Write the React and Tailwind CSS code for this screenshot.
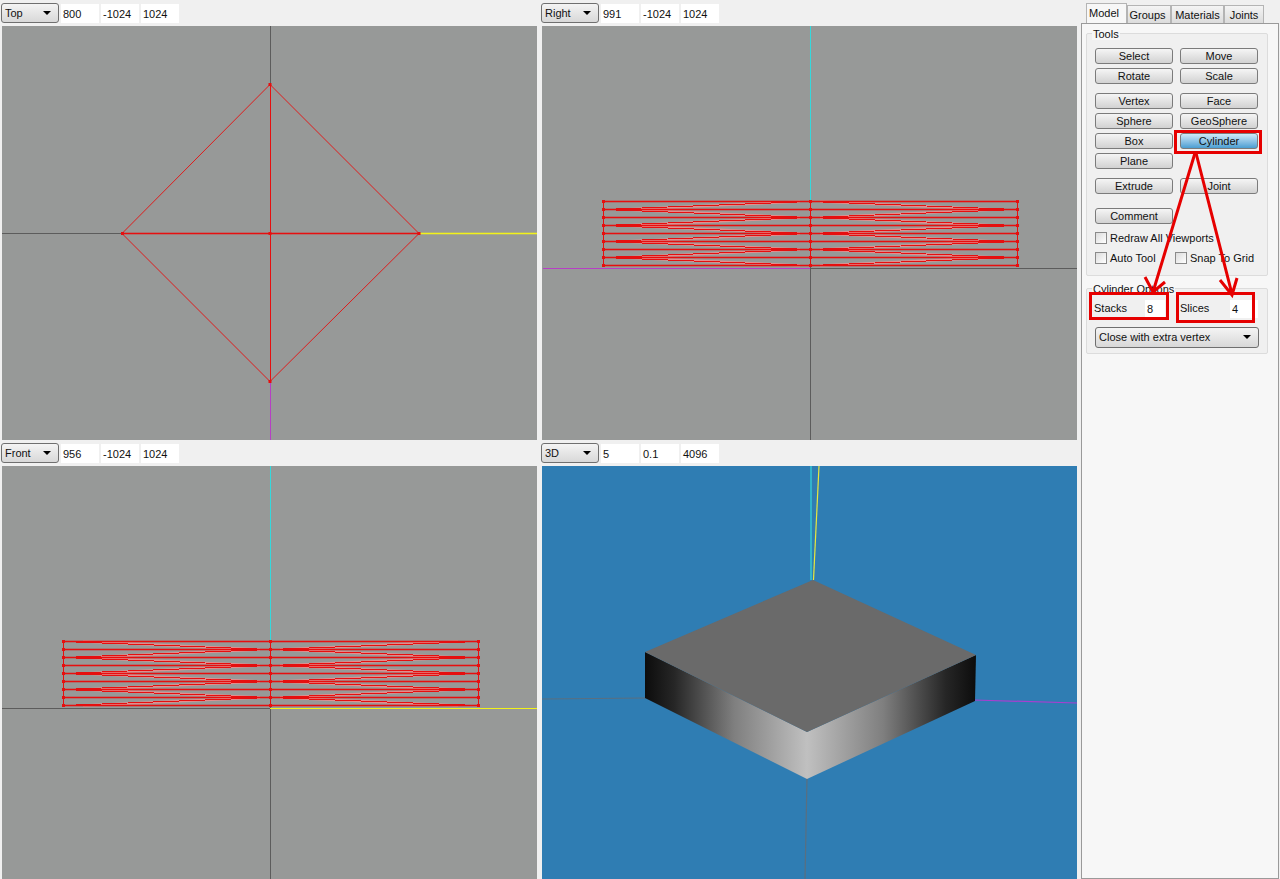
import React from "react";

const ROW_PITCH = 8;
const RED = "#e60f0f";

// single pixel line plus the faint colour bleed the screenshot has around it
function HLine({ x1, x2, y, color }) {
  return (
    <g>
      <line x1={x1} y1={y + 0.5} x2={x2} y2={y + 0.5} stroke={color} strokeWidth="3" opacity="0.28" />
      <line x1={x1} y1={y + 0.5} x2={x2} y2={y + 0.5} stroke={color} strokeWidth="1" shapeRendering="crispEdges" />
    </g>
  );
}

function Mesh({ left, right, center, top, flip }) {
  const rows = Array.from({ length: 9 }, (_, i) => top + i * ROW_PITCH);
  // every band has one diagonal per half, the two halves mirror each other
  const diagonals = [];
  for (let i = 0; i < 8; i++) {
    const leftRow = (i % 2 === 0) === flip ? i : i + 1;
    const midRow = leftRow === i ? i + 1 : i;
    diagonals.push([rows[leftRow], rows[midRow]]);
  }
  return (
    <g>
      <g stroke="#ff8a8a" strokeWidth="2.5" opacity="0.75">
        {diagonals.map(([a, b], i) => (
          <g key={i}>
            <line x1={left + 20} y1={a + 0.5} x2={center - 10} y2={b + 0.5} />
            <line x1={right - 20} y1={a + 0.5} x2={center + 10} y2={b + 0.5} />
          </g>
        ))}
      </g>
      {rows.map((y) => (
        <HLine key={y} x1={left} x2={right} y={y} color={RED} />
      ))}
      <g stroke={RED} strokeWidth="1" shapeRendering="crispEdges">
        {[left, center, right].map((x) => (
          <line key={x} x1={x + 0.5} y1={top} x2={x + 0.5} y2={top + 64} />
        ))}
        {diagonals.map(([a, b], i) => (
          <g key={i}>
            <line x1={left} y1={a + 0.5} x2={center} y2={b + 0.5} />
            <line x1={right} y1={a + 0.5} x2={center} y2={b + 0.5} />
          </g>
        ))}
      </g>
      <g fill={RED}>
        {rows.map((y) =>
          [left, center, right].map((x) => <rect key={x} x={x - 1} y={y - 1} width="3" height="3" />)
        )}
      </g>
    </g>
  );
}

function TopView() {
  return (
    <svg width="535" height="414" viewBox="2 26 535 414" className="block">
      <g strokeWidth="1" shapeRendering="crispEdges">
        <line x1="270.5" y1="26" x2="270.5" y2="84" stroke="#5c5c5c" />
        <line x1="2" y1="233.5" x2="122" y2="233.5" stroke="#5c5c5c" />
        <line x1="270.5" y1="381" x2="270.5" y2="440" stroke="#b63fc4" />
        <line x1="270.5" y1="84" x2="270.5" y2="381" stroke={RED} />
      </g>
      <HLine x1={419} x2={537} y={233} color="#f2f21a" />
      <HLine x1={122} x2={419} y={233} color={RED} />
      <path d="M270 84.5 419 233.5 270 381.5 122 233.5Z" fill="none" stroke={RED} strokeWidth="0.9" />
      <g fill={RED}>
        <rect x="268.5" y="83" width="3" height="3" />
        <rect x="417.5" y="232" width="3" height="3" />
        <rect x="268.5" y="380" width="3" height="3" />
        <rect x="121" y="232" width="3" height="3" />
        <rect x="268.5" y="232" width="3" height="3" />
      </g>
    </svg>
  );
}

function RightView() {
  return (
    <svg width="535" height="414" viewBox="542 26 535 414" className="block">
      <g strokeWidth="1" shapeRendering="crispEdges">
        <line x1="810.5" y1="26" x2="810.5" y2="201" stroke="#35d8dc" />
        <line x1="810.5" y1="266" x2="810.5" y2="440" stroke="#5c5c5c" />
        <line x1="543" y1="268.5" x2="810" y2="268.5" stroke="#b63fc4" />
        <line x1="810" y1="268.5" x2="1077" y2="268.5" stroke="#5c5c5c" />
      </g>
      <Mesh left={603} right={1017} center={810} top={201} flip={false} />
    </svg>
  );
}

function FrontView() {
  return (
    <svg width="535" height="413" viewBox="2 466 535 413" className="block">
      <g strokeWidth="1" shapeRendering="crispEdges">
        <line x1="270.5" y1="466" x2="270.5" y2="641" stroke="#35d8dc" />
        <line x1="270.5" y1="706" x2="270.5" y2="879" stroke="#5c5c5c" />
        <line x1="2" y1="708.5" x2="270" y2="708.5" stroke="#5c5c5c" />
        <line x1="270" y1="708.5" x2="537" y2="708.5" stroke="#f2f21a" />
      </g>
      <Mesh left={63} right={478} center={270} top={641} flip={true} />
    </svg>
  );
}

function PerspectiveView() {
  return (
    <svg width="535" height="413" viewBox="542 466 535 413" className="block">
      <defs>
        <linearGradient id="leftFace" x1="645" y1="0" x2="807" y2="0" gradientUnits="userSpaceOnUse">
          <stop stopColor="#0c0c0c" />
          <stop offset="0.18" stopColor="#262626" />
          <stop offset="0.55" stopColor="#7f7f7f" />
          <stop offset="1" stopColor="#c0c0c0" />
        </linearGradient>
        <linearGradient id="rightFace" x1="807" y1="0" x2="976" y2="0" gradientUnits="userSpaceOnUse">
          <stop stopColor="#c0c0c0" />
          <stop offset="0.45" stopColor="#7f7f7f" />
          <stop offset="0.82" stopColor="#262626" />
          <stop offset="1" stopColor="#0c0c0c" />
        </linearGradient>
      </defs>
      <g strokeWidth="1.2" fill="none">
        <line x1="811" y1="466" x2="811" y2="580" stroke="#35d8dc" />
        <line x1="819" y1="466" x2="813.5" y2="580" stroke="#e8e83c" />
        <line x1="542" y1="699" x2="646" y2="698" stroke="#5a6f80" />
        <line x1="974" y1="700" x2="1077" y2="703" stroke="#a83fd0" />
        <line x1="807" y1="778" x2="805" y2="879" stroke="#5a6f80" />
      </g>
      <path d="M645 652 807 732 807 779 645 698Z" fill="url(#leftFace)" />
      <path d="M807 732 976 655 975 701 807 779Z" fill="url(#rightFace)" />
      <path d="M813 580 976 655 807 732 645 652Z" fill="#6a6a6a" />
    </svg>
  );
}

function Dropdown({ label, className }) {
  return (
    <div
      className={`flex items-center justify-between rounded-[3px] border border-[#6f6f6f] bg-gradient-to-b from-[#f4f4f4] to-[#d8d8d8] pl-[3px] pr-[7px] ${className}`}
    >
      <span>{label}</span>
      <span className="h-0 w-0 border-x-[4px] border-t-[4px] border-x-transparent border-t-black" />
    </div>
  );
}

function Field({ value, className }) {
  return <div className={`flex items-center bg-white pl-[2px] ${className}`}>{value}</div>;
}

function Viewport({ view, values, canvas = "bg-[#979998]", children }) {
  return (
    <div className="flex flex-col">
      <div className="flex h-[26px] items-start gap-[2px] pl-[1px] pt-[3px]">
        <Dropdown label={view} className="h-[20px] w-[58px]" />
        {values.map((value) => (
          <Field key={value} value={value} className="mt-[1px] h-[19px] w-[38px]" />
        ))}
      </div>
      <div className={`ml-[2px] w-[535px] flex-1 overflow-hidden ${canvas}`}>{children}</div>
    </div>
  );
}

function ToolButton({ label, active }) {
  return (
    <div
      className={`flex h-[16px] items-center justify-center rounded-[3px] border border-[#7b7b7b] bg-gradient-to-b ${
        active ? "from-[#cfeaf8] to-[#4a9ed2]" : "from-[#f5f5f5] to-[#d2d2d2]"
      }`}
    >
      {label}
    </div>
  );
}

function ToolRow({ labels, className = "" }) {
  return (
    <div className={`grid grid-cols-[78px_78px] gap-x-[7px] gap-y-[4px] ${className}`}>
      {labels.map((label, i) =>
        label ? <ToolButton key={label} label={label} active={label === "Cylinder"} /> : <div key={i} />
      )}
    </div>
  );
}

function Check({ label, className = "" }) {
  return (
    <div className={`flex h-[12px] items-center gap-[3px] ${className}`}>
      <span className="h-[12px] w-[12px] border border-[#8a8a8a] bg-gradient-to-br from-[#dcdcdc] to-white" />
      <span>{label}</span>
    </div>
  );
}

function Tab({ label, active, className }) {
  return (
    <div
      className={`flex items-center border border-b-0 border-[#b4b4b4] ${
        active ? "-mb-px h-[21px] bg-[#f7f7f7] pb-[2px]" : "h-[18px] bg-gradient-to-b from-[#f4f4f4] to-[#dcdcdc]"
      } ${className}`}
    >
      {label}
    </div>
  );
}

function Annotations() {
  return (
    <svg
      width="1280"
      height="879"
      viewBox="0 0 1280 879"
      className="pointer-events-none absolute left-0 top-0"
      fill="none"
      stroke="#e60000"
      strokeWidth="3"
    >
      <rect x="1175.5" y="131.5" width="85" height="21" />
      <rect x="1090.5" y="293.5" width="77" height="25" />
      <rect x="1177.5" y="293.5" width="76" height="28" />
      <path d="M1195 153 1153 292M1145 277 1153 292 1165 282" />
      <path d="M1196 153 1232 294M1220 280 1232 295 1237 278" />
    </svg>
  );
}

function SidePanel() {
  return (
    <div className="flex w-[200px] flex-col">
      <div className="flex items-end pl-[6px] pt-[3px]">
        <Tab label="Model" active className="w-[41px] pl-[2px]" />
        <Tab label="Groups" className="w-[44px] justify-center pr-[3px]" />
        <Tab label="Materials" className="w-[53px] justify-center" />
        <Tab label="Joints" className="w-[40px] justify-center" />
      </div>
      <div className="ml-[1px] w-[198px] flex-1 border border-[#9a9a9a] bg-[#f7f7f7] pl-[4px]">
        <div className="relative mt-[9px] h-[243px] w-[182px] rounded-[2px] border border-[#dcdcdc] bg-[#f0f0f0] pl-[8px] pt-[14px]">
          <span className="absolute -top-[6px] left-[5px] bg-[#f7f7f7] px-px">Tools</span>
          <ToolRow labels={["Select", "Move", "Rotate", "Scale"]} />
          <ToolRow
            labels={["Vertex", "Face", "Sphere", "GeoSphere", "Box", "Cylinder", "Plane", ""]}
            className="mt-[9px]"
          />
          <ToolRow labels={["Extrude", "Joint"]} className="mt-[9px]" />
          <ToolRow labels={["Comment", ""]} className="mt-[14px]" />
          <Check label="Redraw All Viewports" className="mt-[8px]" />
          <div className="mt-[8px] flex">
            <Check label="Auto Tool" className="w-[80px]" />
            <Check label="Snap To Grid" />
          </div>
        </div>
        <div className="relative mt-[12px] h-[66px] w-[182px] rounded-[2px] border border-[#dcdcdc] bg-[#f0f0f0] pl-[8px]">
          <span className="absolute -top-[6px] left-[5px] bg-[#f7f7f7] px-px">Cylinder Options</span>
          <div className="mt-[11px] flex h-[18px] items-center">
            <span className="-ml-px w-[51px] pb-[2px]">Stacks</span>
            <Field value="8" className="h-[18px] w-[20px]" />
            <span className="ml-[15px] w-[50px] pb-[2px]">Slices</span>
            <Field value="4" className="h-[18px] w-[28px]" />
          </div>
          <Dropdown label="Close with extra vertex" className="mt-[9px] h-[21px] w-[164px] pb-[2px]" />
        </div>
      </div>
    </div>
  );
}

export default function App() {
  return (
    <div className="relative flex h-[879px] w-[1280px] overflow-hidden bg-[#f0f0f0] font-['Liberation_Sans',sans-serif] text-[11px] leading-[12px] text-[#111]">
      <div className="grid w-[1080px] grid-cols-[540px_540px] grid-rows-[440px_439px]">
        <Viewport view="Top" values={["800", "-1024", "1024"]}>
          <TopView />
        </Viewport>
        <Viewport view="Right" values={["991", "-1024", "1024"]}>
          <RightView />
        </Viewport>
        <Viewport view="Front" values={["956", "-1024", "1024"]}>
          <FrontView />
        </Viewport>
        <Viewport view="3D" values={["5", "0.1", "4096"]} canvas="bg-[#2f7db3]">
          <PerspectiveView />
        </Viewport>
      </div>
      <SidePanel />
      <Annotations />
    </div>
  );
}
